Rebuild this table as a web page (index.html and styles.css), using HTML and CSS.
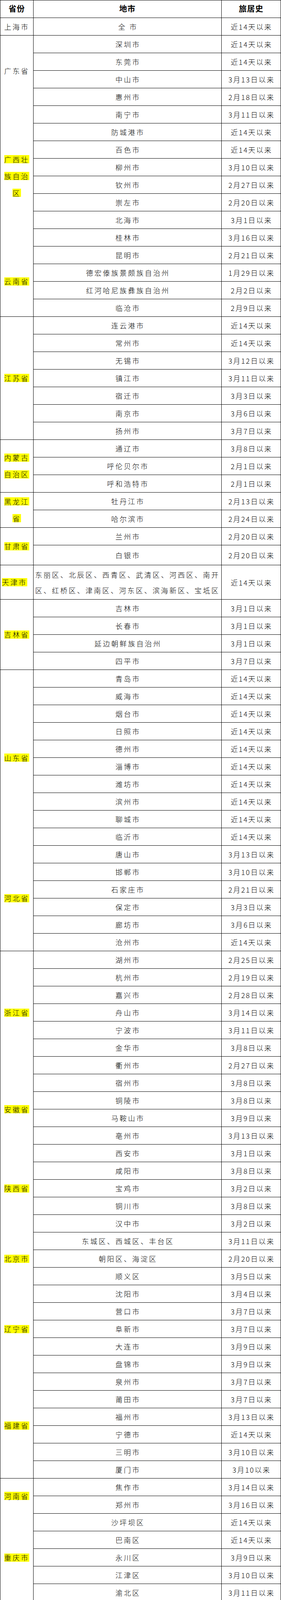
FILE: index.html
```html
<!DOCTYPE html>
<html lang="zh-CN">
<head>
<meta charset="utf-8">
<title>旅居史地市</title>
<link rel="stylesheet" href="styles.css">
</head>
<body>
<div class="sheet">
  <div class="cell head">省份</div><div class="cell head">地市</div><div class="cell head">旅居史</div>

  <div class="cell prov"><span class="name">上海市</span></div><div class="cell city">全 市</div><div class="cell date">近14天以来</div>

  <div class="cell prov r4 open"><span class="name">广东省</span></div>
  <div class="cell city">深圳市</div><div class="cell date">近14天以来</div>
  <div class="cell city">东莞市</div><div class="cell date">近14天以来</div>
  <div class="cell city">中山市</div><div class="cell date">3月13日以来</div>
  <div class="cell city">惠州市</div><div class="cell date">2月18日以来</div>

  <div class="cell prov r8 open"><span class="name"><mark>广西壮族自治区</mark></span></div>
  <div class="cell city">南宁市</div><div class="cell date">3月11日以来</div>
  <div class="cell city">防城港市</div><div class="cell date">近14天以来</div>
  <div class="cell city">百色市</div><div class="cell date">近14天以来</div>
  <div class="cell city">柳州市</div><div class="cell date">3月10日以来</div>
  <div class="cell city">钦州市</div><div class="cell date">2月27日以来</div>
  <div class="cell city">崇左市</div><div class="cell date">2月20日以来</div>
  <div class="cell city">北海市</div><div class="cell date">3月1日以来</div>
  <div class="cell city">桂林市</div><div class="cell date">3月16日以来</div>

  <div class="cell prov r4"><span class="name"><mark>云南省</mark></span></div>
  <div class="cell city">昆明市</div><div class="cell date">2月21日以来</div>
  <div class="cell city">德宏傣族景颇族自治州</div><div class="cell date">1月29日以来</div>
  <div class="cell city">红河哈尼族彝族自治州</div><div class="cell date">2月2日以来</div>
  <div class="cell city">临沧市</div><div class="cell date">2月9日以来</div>

  <div class="cell prov r7"><span class="name"><mark>江苏省</mark></span></div>
  <div class="cell city">连云港市</div><div class="cell date">近14天以来</div>
  <div class="cell city">常州市</div><div class="cell date">近14天以来</div>
  <div class="cell city">无锡市</div><div class="cell date">3月12日以来</div>
  <div class="cell city">镇江市</div><div class="cell date">3月11日以来</div>
  <div class="cell city">宿迁市</div><div class="cell date">3月3日以来</div>
  <div class="cell city">南京市</div><div class="cell date">3月6日以来</div>
  <div class="cell city">扬州市</div><div class="cell date">3月7日以来</div>

  <div class="cell prov r3"><span class="name"><mark>内蒙古自治区</mark></span></div>
  <div class="cell city">通辽市</div><div class="cell date">3月8日以来</div>
  <div class="cell city">呼伦贝尔市</div><div class="cell date">2月1日以来</div>
  <div class="cell city">呼和浩特市</div><div class="cell date">2月1日以来</div>

  <div class="cell prov r2"><span class="name"><mark>黑龙江省</mark></span></div>
  <div class="cell city">牡丹江市</div><div class="cell date">2月13日以来</div>
  <div class="cell city">哈尔滨市</div><div class="cell date">2月24日以来</div>

  <div class="cell prov r2"><span class="name"><mark>甘肃省</mark></span></div>
  <div class="cell city">兰州市</div><div class="cell date">2月20日以来</div>
  <div class="cell city">白银市</div><div class="cell date">2月20日以来</div>

  <div class="cell prov flush"><span class="name"><mark>天津市</mark></span></div>
  <div class="cell city districts">东丽区、北辰区、西青区、武清区、河西区、南开区、红桥区、津南区、河东区、滨海新区、宝坻区</div><div class="cell date">近14天以来</div>

  <div class="cell prov r4"><span class="name"><mark>吉林省</mark></span></div>
  <div class="cell city">吉林市</div><div class="cell date">3月1日以来</div>
  <div class="cell city">长春市</div><div class="cell date">3月1日以来</div>
  <div class="cell city">延边朝鲜族自治州</div><div class="cell date">3月1日以来</div>
  <div class="cell city">四平市</div><div class="cell date">3月7日以来</div>

  <div class="cell prov r10 open"><span class="name"><mark>山东省</mark></span></div>
  <div class="cell city">青岛市</div><div class="cell date">近14天以来</div>
  <div class="cell city">威海市</div><div class="cell date">近14天以来</div>
  <div class="cell city">烟台市</div><div class="cell date">近14天以来</div>
  <div class="cell city">日照市</div><div class="cell date">近14天以来</div>
  <div class="cell city">德州市</div><div class="cell date">近14天以来</div>
  <div class="cell city">淄博市</div><div class="cell date">近14天以来</div>
  <div class="cell city">潍坊市</div><div class="cell date">近14天以来</div>
  <div class="cell city">滨州市</div><div class="cell date">近14天以来</div>
  <div class="cell city">聊城市</div><div class="cell date">近14天以来</div>
  <div class="cell city">临沂市</div><div class="cell date">近14天以来</div>

  <div class="cell prov r6"><span class="name"><mark>河北省</mark></span></div>
  <div class="cell city">唐山市</div><div class="cell date">3月13日以来</div>
  <div class="cell city">邯郸市</div><div class="cell date">3月10日以来</div>
  <div class="cell city">石家庄市</div><div class="cell date">2月21日以来</div>
  <div class="cell city">保定市</div><div class="cell date">3月3日以来</div>
  <div class="cell city">廊坊市</div><div class="cell date">3月6日以来</div>
  <div class="cell city">沧州市</div><div class="cell date">近14天以来</div>

  <div class="cell prov r7 open"><span class="name"><mark>浙江省</mark></span></div>
  <div class="cell city">湖州市</div><div class="cell date">2月25日以来</div>
  <div class="cell city">杭州市</div><div class="cell date">2月19日以来</div>
  <div class="cell city">嘉兴市</div><div class="cell date">2月28日以来</div>
  <div class="cell city">舟山市</div><div class="cell date">3月14日以来</div>
  <div class="cell city">宁波市</div><div class="cell date">3月11日以来</div>
  <div class="cell city">金华市</div><div class="cell date">3月8日以来</div>
  <div class="cell city">衢州市</div><div class="cell date">2月27日以来</div>

  <div class="cell prov r4 open"><span class="name"><mark>安徽省</mark></span></div>
  <div class="cell city">宿州市</div><div class="cell date">3月8日以来</div>
  <div class="cell city">铜陵市</div><div class="cell date">3月8日以来</div>
  <div class="cell city">马鞍山市</div><div class="cell date">3月9日以来</div>
  <div class="cell city">亳州市</div><div class="cell date">3月13日以来</div>

  <div class="cell prov r5 open"><span class="name"><mark>陕西省</mark></span></div>
  <div class="cell city">西安市</div><div class="cell date">3月1日以来</div>
  <div class="cell city">咸阳市</div><div class="cell date">3月8日以来</div>
  <div class="cell city">宝鸡市</div><div class="cell date">3月2日以来</div>
  <div class="cell city">铜川市</div><div class="cell date">3月8日以来</div>
  <div class="cell city">汉中市</div><div class="cell date">3月2日以来</div>

  <div class="cell prov r3 open"><span class="name"><mark>北京市</mark></span></div>
  <div class="cell city">东城区、西城区、丰台区</div><div class="cell date">3月11日以来</div>
  <div class="cell city">朝阳区、海淀区</div><div class="cell date">2月20日以来</div>
  <div class="cell city">顺义区</div><div class="cell date">3月5日以来</div>

  <div class="cell prov r5 open"><span class="name"><mark>辽宁省</mark></span></div>
  <div class="cell city">沈阳市</div><div class="cell date">3月4日以来</div>
  <div class="cell city">营口市</div><div class="cell date">3月7日以来</div>
  <div class="cell city">阜新市</div><div class="cell date">3月7日以来</div>
  <div class="cell city">大连市</div><div class="cell date">3月9日以来</div>
  <div class="cell city">盘锦市</div><div class="cell date">3月9日以来</div>

  <div class="cell prov r6"><span class="name"><mark>福建省</mark></span></div>
  <div class="cell city">泉州市</div><div class="cell date">3月7日以来</div>
  <div class="cell city">莆田市</div><div class="cell date">3月7日以来</div>
  <div class="cell city">福州市</div><div class="cell date">3月13日以来</div>
  <div class="cell city">宁德市</div><div class="cell date">近14天以来</div>
  <div class="cell city">三明市</div><div class="cell date">3月10日以来</div>
  <div class="cell city">厦门市</div><div class="cell date">3月10以来</div>

  <div class="cell prov r2 open"><span class="name"><mark>河南省</mark></span></div>
  <div class="cell city">焦作市</div><div class="cell date">3月14日以来</div>
  <div class="cell city">郑州市</div><div class="cell date">3月16日以来</div>

  <div class="cell prov r5 open"><span class="name"><mark>重庆市</mark></span></div>
  <div class="cell city">沙坪坝区</div><div class="cell date">近14天以来</div>
  <div class="cell city">巴南区</div><div class="cell date">近14天以来</div>
  <div class="cell city">永川区</div><div class="cell date">3月9日以来</div>
  <div class="cell city">江津区</div><div class="cell date">3月10日以来</div>
  <div class="cell city">渝北区</div><div class="cell date">3月11日以来</div>

  <div class="cell prov"><span class="name"><mark>贵州省</mark></span></div>
  <div class="cell city">遵义市</div><div class="cell date">3月7日以来</div>

  <div class="cell prov r2"><span class="name"><mark>江西省</mark></span></div>
  <div class="cell city">南昌市</div><div class="cell date">3月11日以来</div>
  <div class="cell city">宜春市</div><div class="cell date">3月13日以来</div>

  <div class="cell prov r4 open strong"><span class="name">湖南省</span></div>
  <div class="cell city strong">怀化市</div><div class="cell date strong">3月2日以来</div>
  <div class="cell city strong">长沙市</div><div class="cell date strong">3月16日以来</div>
  <div class="cell city strong">邵阳市邵阳县、新宁县</div><div class="cell date strong">3月13日以来</div>
  <div class="cell city strong">岳阳市湘阴县</div><div class="cell date strong">3月16日以来</div>

  <div class="cell prov"><span class="name">/</span></div>
  <div class="cell city strong">中高风险区、封控区管控区所在地市</div><div class="cell date strong">近14天以来</div>
</div>
</body>
</html>
```

FILE: styles.css
```css
html, body {
  margin: 0;
  padding: 0;
  background: #ffffff;
}

body {
  font-family: "Noto Sans CJK SC", "Liberation Sans", sans-serif;
  font-weight: 300;
  color: #000000;
  font-size: 18px;
  line-height: 24px;
}

/* 98 rows: the 白银 row (32nd) is 51px, the 天津 row (33rd) is 88px, the rest 45px */
.sheet {
  display: grid;
  grid-template-columns: 85px 482px 152px;
  grid-template-rows: repeat(31, 45px) 51px 88px repeat(65, 45px);
  width: 720px;
  height: 4460px;
  border-top: 1px solid #000;
  border-left: 1px solid #000;
  box-sizing: border-box;
  overflow: hidden;
}

.cell {
  box-sizing: border-box;
  border-right: 1px solid #000;
  border-bottom: 1px solid #000;
  display: flex;
  align-items: center;
  justify-content: center;
  text-align: center;
  line-height: 24px;
  letter-spacing: 3.5px;
  white-space: nowrap;
  min-width: 0;
  min-height: 0;
  overflow: hidden;
}

.head {
  font-weight: 700;
  font-size: 20px;
  letter-spacing: 1px;
  padding-bottom: 2px;
}

.prov {
  grid-column: 1;
  padding: 0;
  white-space: normal;
}

.city {
  grid-column: 2;
  padding-left: 3px;
}

.date {
  grid-column: 3;
  letter-spacing: 2.5px;
  padding-left: 2px;
}

.name {
  display: block;
  width: 100%;
  line-height: 43px;
  text-align: center;
}

.flush .name {
  text-align: left;
  padding-left: 4px;
  box-sizing: border-box;
}

mark {
  color: inherit;
  background: linear-gradient(#ffff00, #ffff00) center / 100% 21px no-repeat;
  -webkit-box-decoration-break: clone;
  box-decoration-break: clone;
}

.open {
  border-bottom: none;
}

.r2 { grid-row: span 2; }
.r3 { grid-row: span 3; }
.r4 { grid-row: span 4; }
.r5 { grid-row: span 5; }
.r6 { grid-row: span 6; }
.r7 { grid-row: span 7; }
.r8 { grid-row: span 8; }
.r10 { grid-row: span 10; }

.districts {
  justify-content: flex-start;
  text-align: left;
  line-height: 40px;
  white-space: normal;
  padding: 4px 2px 4px 4px;
}

.strong {
  font-weight: 700;
}
```
